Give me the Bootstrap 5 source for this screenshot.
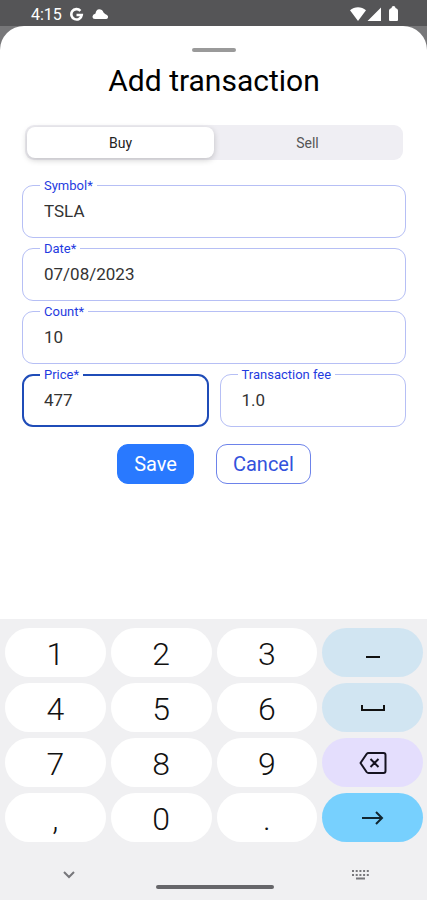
<!DOCTYPE html>
<html lang="en">
<head>
<meta charset="utf-8">
<meta name="viewport" content="width=device-width, initial-scale=1">
<title>Add transaction</title>
<link href="https://cdn.jsdelivr.net/npm/bootstrap@5.3.0/dist/css/bootstrap.min.css" rel="stylesheet">
<style>
  body { font-family: Roboto, "Liberation Sans", sans-serif; background: #555557; color: #111; }
  svg { display: block; }
  .status-bar { height: 26px; padding: 4px 27px 0 31px; font-size: 16px; line-height: 22px; color: #fff; }
  .behind { background: #777779; }
  .sheet { background: #fff; border-radius: 24px 24px 0 0; padding: 22px 21px 0 22px; }
  .grabber { width: 44px; height: 4px; border-radius: 2px; background: #9a9a9a; }
  .sheet-title { font-size: 30px; line-height: 40px; font-weight: 400; margin: 9px 0 24px; color: #000; }
  .segment { background: #efeef3; border-radius: 9px; padding: 2px; margin: 0 3px 25px; }
  .segment label { flex: 1 1 0; height: 31px; line-height: 33px; border-radius: 8px; font-size: 14px; text-align: center; color: #555; cursor: pointer; }
  .segment .btn-check:checked + label { background: #fff; color: #222; box-shadow: 0 2px 6px rgba(0,0,0,.2); }
  .fields { display: grid; grid-template-columns: 1fr 1fr; gap: 10px 11px; }
  .wide { grid-column: 1 / -1; }
  .outlined label { position: absolute; left: 18px; top: -7px; padding: 0 4px; background: #fff; font-size: 13px; line-height: 16px; color: #1f3be0; }
  .outlined .form-control { height: 53px; padding: 0 20px 2px 21px; border: 1px solid #b6bff5; border-radius: 11px; font-size: 17px; color: #333; background: #fff; box-shadow: none; }
  .outlined .form-control.current { border: 2px solid #1f4cb8; padding: 0 19px 2px 20px; }
  .actions { gap: 22px; margin-top: 17px; }
  .actions .btn { height: 40px; padding: 0 16px; border-radius: 11px; font-size: 20px; line-height: 38px; }
  .btn-save { background: #2979ff; border-color: #2979ff; color: #fff; }
  .btn-cancel { background: #fff; border-color: #6d83ea; color: #3352dc; }
  .keyboard { background: #f0f0f2; padding: 9px 4px 0 5px; }
  .keys { display: grid; grid-template-columns: repeat(4, 1fr); gap: 6px 5px; }
  .key { height: 49px; border: 0; border-radius: 25px; background: #fff; color: #111; font-size: 32px; line-height: 53px; font-weight: 300; padding: 0; }
  .key-soft { background: #d1e5f2; }
  .key-delete { background: #e4defd; }
  .key-enter { background: #77d0fe; }
  .nav-strip { height: 58px; padding: 0 53px 0 54px; }
  .nav-strip button { border: 0; background: none; padding: 0; margin-top: 22px; height: 20px; }
  .home-pill { width: 118px; height: 4px; border-radius: 2px; background: #66666a; margin-top: 43px; }
</style>
<script src="https://cdn.jsdelivr.net/npm/bootstrap@5.3.0/dist/js/bootstrap.bundle.min.js"></script>
</head>
<body class="d-flex flex-column min-vh-100">
<header class="status-bar d-flex justify-content-between">
  <div class="d-flex">
    <span>4:15</span>
    <svg class="ms-2" width="14" height="22" viewBox="0 0 14 22" fill="none" stroke="#fff" stroke-width="2.6"><path d="M10.400 6.800A5.200 5.200 0 1 0 11.700 11H6.500"/></svg>
    <svg class="ms-2" width="17" height="22" viewBox="0 0 17 22" fill="#fff"><path d="M3 15Q.5 15 .5 12.500 .5 10.300 3.500 9.500 4 5.500 7.200 5.300 10.300 5.300 11.500 8.500 13 10 15 11 16.500 12 16 13.500 15.500 15 14 15z"/></svg>
  </div>
  <svg width="51" height="22" viewBox="0 0 51 22" fill="#fff"><path d="M1 6.200C5.500 2.300 12.500 2.300 17 6.200L9 17zM32 3.500V17H18.500zM42.500 4q0-2 2-2t2 2q2.500.5 2.500 2.500V16q0 1-1 1h-7q-1 0-1-1V6.500q0-2 2.500-2.500z"/></svg>
</header>
<div class="behind d-flex flex-column flex-grow-1">
  <main class="sheet flex-grow-1">
    <div class="grabber mx-auto"></div>
    <h1 class="sheet-title text-center">Add transaction</h1>
    <form>
      <div class="segment d-flex" role="group" aria-label="Transaction type">
        <input class="btn-check" type="radio" name="type" id="buy" checked>
        <label for="buy">Buy</label>
        <input class="btn-check" type="radio" name="type" id="sell">
        <label for="sell">Sell</label>
      </div>
      <div class="fields">
        <div class="outlined wide position-relative"><input class="form-control" id="symbol" value="TSLA"><label for="symbol">Symbol*</label></div>
        <div class="outlined wide position-relative"><input class="form-control" id="date" value="07/08/2023"><label for="date">Date*</label></div>
        <div class="outlined wide position-relative"><input class="form-control" id="count" value="10"><label for="count">Count*</label></div>
        <div class="outlined position-relative"><input class="form-control current" id="price" value="477"><label for="price">Price*</label></div>
        <div class="outlined position-relative"><input class="form-control" id="fee" value="1.0"><label for="fee">Transaction fee</label></div>
      </div>
      <div class="actions d-flex justify-content-center">
        <button type="submit" class="btn btn-save">Save</button>
        <button type="button" class="btn btn-cancel">Cancel</button>
      </div>
    </form>
  </main>
</div>
<footer class="keyboard">
  <div class="keys">
    <button type="button" class="key">1</button>
    <button type="button" class="key">2</button>
    <button type="button" class="key">3</button>
    <button type="button" class="key key-soft" aria-label="Minus"><svg class="mx-auto" width="28" height="28" viewBox="0 0 28 28" stroke="#111" stroke-width="2"><path d="M7 18H21"/></svg></button>
    <button type="button" class="key">4</button>
    <button type="button" class="key">5</button>
    <button type="button" class="key">6</button>
    <button type="button" class="key key-soft" aria-label="Space"><svg class="mx-auto" width="28" height="28" viewBox="0 0 28 28" fill="none" stroke="#111" stroke-width="2"><path d="M3 11V16H25V11"/></svg></button>
    <button type="button" class="key">7</button>
    <button type="button" class="key">8</button>
    <button type="button" class="key">9</button>
    <button type="button" class="key key-delete" aria-label="Delete"><svg class="mx-auto" width="28" height="28" viewBox="0 0 28 28" fill="none" stroke="#151320" stroke-width="2"><path d="M9.500 4H24.500Q26.500 4 26.500 6V22Q26.500 24 24.500 24H9.500Q8.400 24 7.600 23L1.500 14 7.600 5Q8.400 4 9.500 4zM11.500 10l8 8M19.500 10l-8 8" stroke-linejoin="round"/></svg></button>
    <button type="button" class="key">,</button>
    <button type="button" class="key">0</button>
    <button type="button" class="key">.</button>
    <button type="button" class="key key-enter" aria-label="Next"><svg class="mx-auto" width="28" height="28" viewBox="0 0 28 28" fill="none" stroke="#102630" stroke-width="2"><path d="M3 14H23M17 8l6 6-6 6"/></svg></button>
  </div>
  <div class="nav-strip d-flex justify-content-between">
    <button type="button" aria-label="Hide keyboard"><svg width="20" height="20" viewBox="0 0 20 20" fill="none" stroke="#77777b" stroke-width="2"><path d="M5 8l5 5 5-5"/></svg></button>
    <div class="home-pill"></div>
    <button type="button" aria-label="Switch keyboard"><svg width="20" height="20" viewBox="0 0 20 20" fill="none" stroke="#77777b" stroke-width="2"><path d="M2 7H19M2 11H19" stroke-dasharray="2 1.700"/><path d="M6 14.500H15"/></svg></button>
  </div>
</footer>
</body>
</html>
